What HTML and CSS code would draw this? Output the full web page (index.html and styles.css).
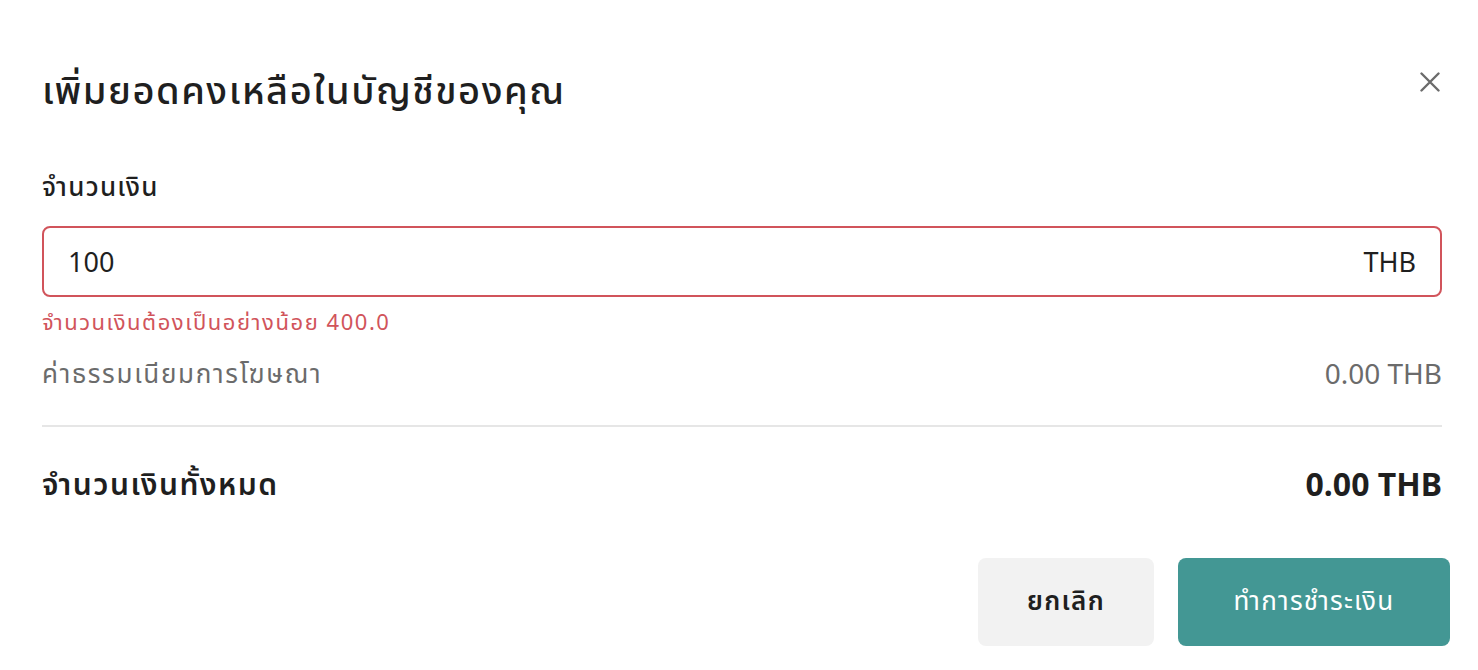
FILE: index.html
```html
<!DOCTYPE html>
<html lang="th">
<head>
  <meta charset="UTF-8" />
  <meta name="viewport" content="width=device-width, initial-scale=1.0"/>
  <title>เพิ่มยอดคงเหลือ</title>
  <link rel="stylesheet" href="styles.css">
</head>
<body>

  <div class="dialog">
    <div class="dialog-header">
      <h1>เพิ่มยอดคงเหลือในบัญชีของคุณ</h1>
      <button class="close" aria-label="close">
        <svg width="20" height="20" viewBox="0 0 20 20">
          <path d="M1.5 1.5 L18.5 18.5 M18.5 1.5 L1.5 18.5" stroke="#6b6b6b" stroke-width="2.4" stroke-linecap="round"/>
        </svg>
      </button>
    </div>

    <label class="field-label" for="amount">จำนวนเงิน</label>
    <div class="amount-box">
      <input type="text" id="amount" value="100" />
      <span class="currency">THB</span>
    </div>
    <div class="error">จำนวนเงินต้องเป็นอย่างน้อย 400.0</div>

    <div class="row fee">
      <span class="thai">ค่าธรรมเนียมการโฆษณา</span>
      <span>0.00 THB</span>
    </div>

    <hr class="divider" />

    <div class="row total">
      <span class="thai">จำนวนเงินทั้งหมด</span>
      <span class="total-value">0.00 THB</span>
    </div>
  </div>

  <div class="actions">
    <button class="btn btn-cancel">ยกเลิก</button>
    <button class="btn btn-pay">ทำการชำระเงิน</button>
  </div>

</body>
</html>
```

FILE: styles.css
```css
body {
  margin: 0;
  background: #fff;
  font-family: "Noto Sans", "Noto Sans Thai", "Liberation Sans", sans-serif;
  color: #1f1f1f;
}

.dialog {
  padding: 0 36px 0 42px;
}

.dialog-header {
  display: flex;
  align-items: flex-start;
  justify-content: space-between;
  padding-top: 66px;
}

h1 {
  margin: 0;
  font-size: 38px;
  font-weight: 500;
  line-height: 46px;
  letter-spacing: 0.04em;
  color: #1f1f1f;
}

.close {
  background: none;
  border: none;
  padding: 0;
  margin: 6px 2px 0 0;
  cursor: pointer;
  display: flex;
}

.field-label {
  display: block;
  margin-top: 58px;
  font-size: 26px;
  font-weight: 500;
  line-height: 32px;
  letter-spacing: 0.05em;
}

.amount-box {
  display: flex;
  align-items: center;
  height: 71px;
  margin-top: 24px;
  border: 2px solid #d1545b;
  border-radius: 8px;
  padding: 0 24px;
  box-sizing: border-box;
}

.amount-box input {
  flex: 1;
  border: none;
  outline: none;
  font: inherit;
  font-size: 27px;
  color: #1f1f1f;
  padding: 0;
  background: transparent;
}

.currency {
  font-size: 27px;
}

.error {
  margin-top: 9px;
  font-size: 22px;
  line-height: 30px;
  letter-spacing: 0.07em;
  color: #d1545b;
}

.row {
  display: flex;
  justify-content: space-between;
  align-items: center;
}

.thai {
  letter-spacing: 0.05em;
}

.fee {
  margin-top: 19px;
  font-size: 28px;
  line-height: 36px;
  color: #6b6b6b;
}

.fee .thai {
  font-size: 26px;
  letter-spacing: 0.065em;
}

.divider {
  border: none;
  border-top: 2px solid #e6e6e6;
  margin: 34px 0 0;
}

.total {
  margin-top: 37px;
  font-size: 30px;
  font-weight: 600;
  line-height: 40px;
}

.total-value {
  font-size: 32px;
  font-weight: 700;
}

.actions {
  display: flex;
  justify-content: flex-end;
  gap: 24px;
  padding-right: 28px;
  margin-top: 54px;
}

.btn {
  height: 88px;
  border: none;
  border-radius: 8px;
  font-family: inherit;
  font-size: 26px;
  letter-spacing: 0.05em;
  cursor: pointer;
}

.btn-cancel {
  width: 176px;
  background: #f2f2f2;
  color: #1f1f1f;
  font-weight: 600;
}

.btn-pay {
  width: 272px;
  background: #439794;
  color: #fff;
  font-weight: 400;
}
```
